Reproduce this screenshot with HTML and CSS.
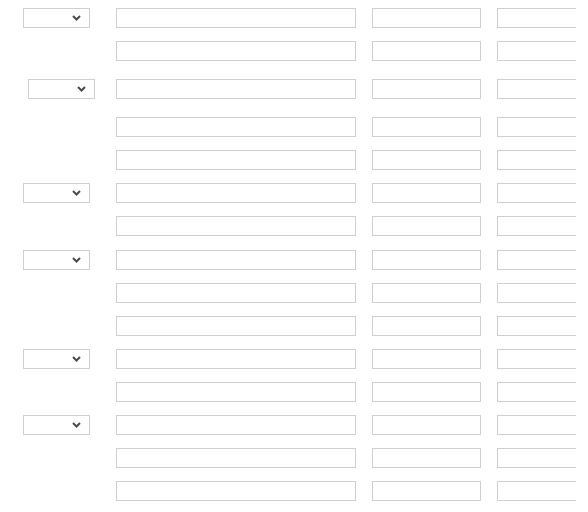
FILE: index.html
```html
<!DOCTYPE html>
<html>
<head>
<meta charset="utf-8">
<link rel="stylesheet" href="styles.css">
</head>
<body>
<div class="page">
  <div class="row first">
    <div class="lead"><div class="select"><svg class="chev" width="9" height="6" viewBox="0 0 9 6"><polyline points="1,1 4.5,4.5 8,1"/></svg></div></div>
    <div class="field wide"></div><div class="field mid"></div><div class="field mid"></div>
  </div>
  <div class="row">
    <div class="lead"></div>
    <div class="field wide"></div><div class="field mid"></div><div class="field mid"></div>
  </div>
  <div class="row loose">
    <div class="lead shifted"><div class="select"><svg class="chev" width="9" height="6" viewBox="0 0 9 6"><polyline points="1,1 4.5,4.5 8,1"/></svg></div></div>
    <div class="field wide"></div><div class="field mid"></div><div class="field mid"></div>
  </div>
  <div class="row loose">
    <div class="lead"></div>
    <div class="field wide"></div><div class="field mid"></div><div class="field mid"></div>
  </div>
  <div class="row">
    <div class="lead"></div>
    <div class="field wide"></div><div class="field mid"></div><div class="field mid"></div>
  </div>
  <div class="row">
    <div class="lead"><div class="select"><svg class="chev" width="9" height="6" viewBox="0 0 9 6"><polyline points="1,1 4.5,4.5 8,1"/></svg></div></div>
    <div class="field wide"></div><div class="field mid"></div><div class="field mid"></div>
  </div>
  <div class="row">
    <div class="lead"></div>
    <div class="field wide"></div><div class="field mid"></div><div class="field mid"></div>
  </div>
  <div class="row plus1">
    <div class="lead"><div class="select"><svg class="chev" width="9" height="6" viewBox="0 0 9 6"><polyline points="1,1 4.5,4.5 8,1"/></svg></div></div>
    <div class="field wide"></div><div class="field mid"></div><div class="field mid"></div>
  </div>
  <div class="row">
    <div class="lead"></div>
    <div class="field wide"></div><div class="field mid"></div><div class="field mid"></div>
  </div>
  <div class="row">
    <div class="lead"></div>
    <div class="field wide"></div><div class="field mid"></div><div class="field mid"></div>
  </div>
  <div class="row">
    <div class="lead"><div class="select"><svg class="chev" width="9" height="6" viewBox="0 0 9 6"><polyline points="1,1 4.5,4.5 8,1"/></svg></div></div>
    <div class="field wide"></div><div class="field mid"></div><div class="field mid"></div>
  </div>
  <div class="row">
    <div class="lead"></div>
    <div class="field wide"></div><div class="field mid"></div><div class="field mid"></div>
  </div>
  <div class="row">
    <div class="lead"><div class="select"><svg class="chev" width="9" height="6" viewBox="0 0 9 6"><polyline points="1,1 4.5,4.5 8,1"/></svg></div></div>
    <div class="field wide"></div><div class="field mid"></div><div class="field mid"></div>
  </div>
  <div class="row">
    <div class="lead"></div>
    <div class="field wide"></div><div class="field mid"></div><div class="field mid"></div>
  </div>
  <div class="row">
    <div class="lead"></div>
    <div class="field wide"></div><div class="field mid"></div><div class="field mid"></div>
  </div>
</div>
</body>
</html>
```
FILE: styles.css
```css
html, body {
  margin: 0;
  padding: 0;
  background: #fff;
  font-family: "Liberation Sans", Arial, sans-serif;
}
.page {
  width: 576px;
  overflow: hidden;
  padding-top: 8px;
  display: flex;
  flex-direction: column;
}
.row {
  display: flex;
  height: 20px;
  margin-top: 13px;
  gap: 16px;
  flex-shrink: 0;
}
.row.first { margin-top: 0; }
.row.loose { margin-top: 18px; }
.row.plus1 { margin-top: 14px; }
.lead {
  width: 100px;
  flex-shrink: 0;
  padding-left: 23px;
  box-sizing: border-box;
  display: flex;
}
.lead.shifted { padding-left: 28px; }
.select {
  width: 67px;
  height: 20px;
  box-sizing: border-box;
  border: 1px solid #cfcfcf;
  background: #fff;
  display: flex;
  align-items: center;
  justify-content: flex-end;
  padding-right: 8px;
}
.chev {
  display: block;
  fill: none;
  stroke: #4a4a4a;
  stroke-width: 2;
}
.field {
  height: 20px;
  box-sizing: border-box;
  border: 1px solid #cfcfcf;
  background: #fff;
  flex-shrink: 0;
}
.field.wide { width: 240px; }
.field.mid { width: 109px; }
```
